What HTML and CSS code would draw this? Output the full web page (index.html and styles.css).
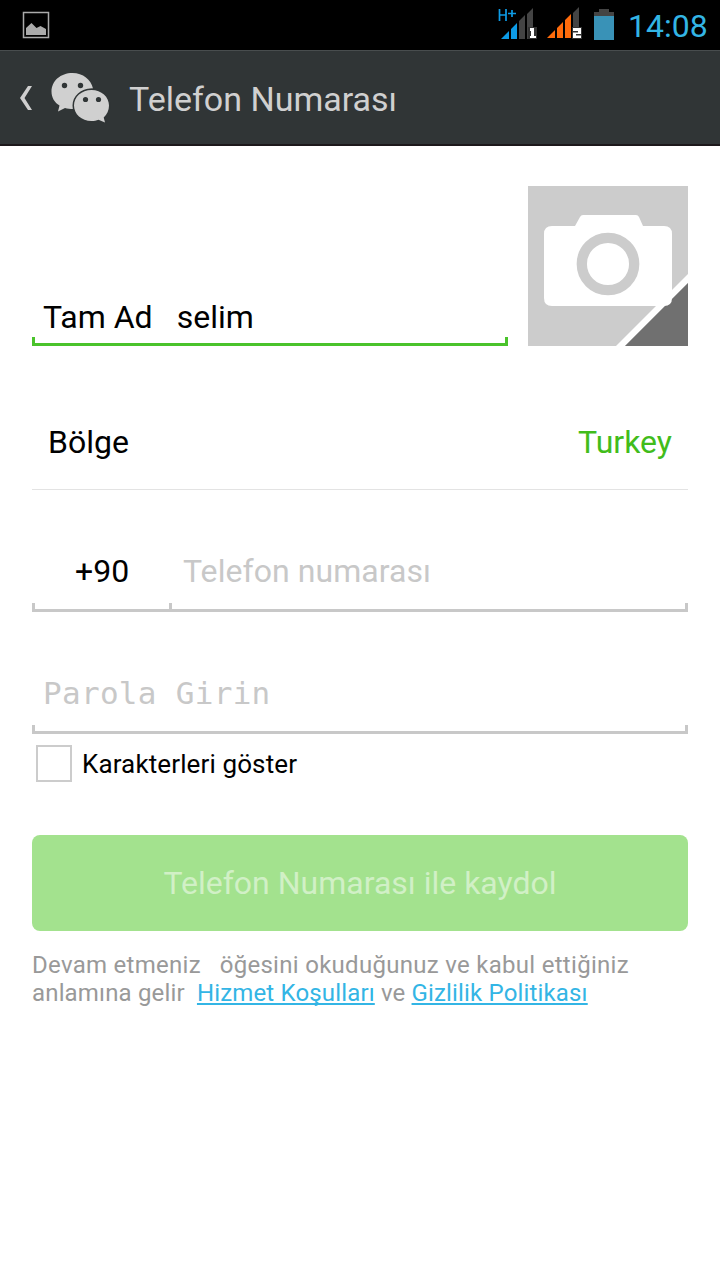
FILE: index.html
```html
<!DOCTYPE html>
<html lang="tr">
<head>
<meta charset="utf-8">
<title>Telefon Numarası</title>
<link rel="stylesheet" href="styles.css">
</head>
<body>
<div class="status">
  <svg class="status-picture" width="28" height="28" viewBox="0 0 28 28">
    <rect x="1.500" y="1.500" width="25" height="25" fill="none" stroke="#aaa" stroke-width="1.500"/>
    <path d="M4 24v-7l5.500-5 5 5 4-2 5.500 3v6z" fill="#aaa"/>
  </svg>
  <svg class="status-signals" width="124" height="42" viewBox="0 0 124 42">
    <g fill="none" stroke="#0d9be6" stroke-width="1.700"><path d="M3.500 9v12M10 9v12M3.500 15H10M12 13.500h8M16 10v7"/></g>
    <path d="M5 39l8-8v8zM15 29l6-6v16h-6z" fill="#0d9be6"/>
    <path d="M23 21l6-6v24h-6zM31 14l6-6v31h-6z" fill="#444"/>
    <rect x="32" y="27" width="9" height="12" fill="#333"/>
    <path d="M34 28h4v8h2v2h-6v-2h1v-5h-1z" fill="#fff"/>
    <path d="M51 38l8-8v8zM61 28l6-6v16h-6zM69 20l6-6v24h-6z" fill="#ff6b0b"/>
    <path d="M77 13l6-6v31h-6z" fill="#444"/>
    <rect x="76" y="27" width="10" height="12" fill="#333"/>
    <path d="M77 28h8v6h-5v1.500h5V38h-8v-5.500h5V31h-5z" fill="#fff"/>
    <path d="M98 16v-4h5v-3h10v3h5v4z" fill="#444"/>
    <rect x="98" y="16" width="20" height="24" fill="#3992b7"/>
  </svg>
  <span class="clock">14:08</span>
</div>
<header class="bar">
  <svg class="back" width="12" height="24" viewBox="0 0 12 24"><path d="M12 0H8L0 12l8 12h4L4.500 12z" fill="#cfcfcf"/></svg>
  <svg class="logo" width="60" height="52" viewBox="0 0 60 52">
    <path d="M21.500 1C9.500 1 .5 9 .5 19.500c0 6 3 11 8 14L7 39.500l7-3.500c2.500.8 5 1 8.500 1C21 26 29 17 42 16.500 40 7.500 32 1 21.500 1z" fill="#d0d0d0"/>
    <path class="bubble-front" d="M40.500 18c-10 0-17.500 7-17.500 15.500S30.500 49 40.500 49c2.500 0 5-.4 7-1.200l6.500 2.700-1.300-5C56 42.500 58 38.500 58 33.500 58 25 50.500 18 40.500 18z" fill="#d0d0d0"/>
    <g fill="#303536"><circle cx="13.500" cy="13.500" r="2.700"/><circle cx="29.500" cy="13.500" r="2.700"/><circle cx="34.500" cy="27.500" r="2.600"/><circle cx="47.500" cy="27.500" r="2.600"/></g>
  </svg>
  <h1 class="title">Telefon Numarası</h1>
</header>
<main class="form">
  <div class="profile">
    <div class="field field-active name"><span>Tam Ad</span><span>selim</span></div>
    <svg class="photo" width="160" height="160" viewBox="0 0 160 160">
      <rect width="160" height="160" fill="#ccc"/>
      <path d="M160 88v9L97 160h-9z" fill="#fff"/>
      <path d="M160 97v63H97z" fill="#707070"/>
      <path d="M24 40h23l5-9q1-2 3-2h53q2 0 3 2l4 9h21q8 0 8 8v64q0 8-8 8H24q-8 0-8-8V48q0-8 8-8z" fill="#fff"/>
      <circle cx="80" cy="78" r="26.200" fill="none" stroke="#ccc" stroke-width="10.300"/>
    </svg>
  </div>
  <div class="region"><span>Bölge</span><span class="country">Turkey</span></div>
  <div class="phone">
    <div class="field code">+90</div>
    <div class="field number">Telefon numarası</div>
  </div>
  <div class="field password">Parola Girin</div>
  <div class="show"><span class="box"></span><span class="show-label">Karakterleri göster</span></div>
  <div class="submit"><span class="submit-label">Telefon Numarası ile kaydol</span></div>
  <p class="terms"><span class="line1">Devam etmeniz &nbsp; öğesini okuduğunuz ve kabul ettiğiniz</span><br><span class="line2">anlamına gelir&nbsp; <a class="link">Hizmet Koşulları</a> ve <a class="link">Gizlilik Politikası</a></span></p>
</main>
</body>
</html>
```
FILE: styles.css
```css
* { box-sizing: border-box; }
body { margin: 0; width: 720px; height: 1280px; overflow: hidden; background: #fff; color: #000; font-family: Roboto, sans-serif; font-size: 32px; line-height: 38px; }
svg { display: block; flex: none; }
.status { height: 50px; background: #000; display: flex; align-items: flex-start; padding-left: 22px; }
.status-picture { margin-top: 11px; }
.status-signals { margin-left: 446px; }
.clock { margin: 7px 0 0 8px; color: #33b5e5; font-size: 32px; white-space: nowrap; }
.bar { height: 96px; background: #303536; border-top: 1px solid #484d4e; border-bottom: 2px solid #1c181b; display: flex; align-items: center; padding-left: 20px; }
.logo { margin-left: 19px; }
.bubble-front { stroke: #303536; stroke-width: 3px; paint-order: stroke; }
.title { margin: 2px 0 0 18px; color: #d0d0d0; font-size: 34px; font-weight: 400; white-space: nowrap; }
.form { padding: 40px 32px 0; }
.profile { display: flex; align-items: flex-end; gap: 20px; }
.field {
  --c: #c8c8c8;
  height: 60px;
  padding: 0 11px;
  white-space: pre;
  background:
    linear-gradient(var(--c), var(--c)) 0 100% / 100% 3px no-repeat,
    linear-gradient(var(--c), var(--c)) 0 100% / 3px 9px no-repeat,
    linear-gradient(var(--c), var(--c)) 100% 100% / 3px 9px no-repeat;
}
.field-active { --c: #4ac32b; }
.name { width: 476px; padding-top: 12px; display: flex; gap: 24px; }
.region { margin-top: 48px; height: 96px; padding: 1px 16px 0; display: flex; align-items: center; justify-content: space-between; border-bottom: 1px solid #e3e3e3; }
.country { color: #41bc1b; }
.phone { margin-top: 62px; display: flex; }
.code { width: 140px; padding-left: 43px; }
.number { flex: 1; color: #c8c8c8; letter-spacing: 0.06px; background-position: 0 100%, -9px 100%, 100% 100%; }
.password { margin-top: 62px; color: #c8c8c8; font-family: "DejaVu Sans Mono", monospace; font-size: 31px; letter-spacing: 0.3px; }
.show { display: flex; align-items: center; gap: 10px; margin: 11px 0 0 4px; height: 37px; font-size: 26px; letter-spacing: 0.12px; }
.box { width: 36px; height: 37px; border: 2px solid #ccc; }
.submit { margin-top: 53px; height: 96px; border-radius: 8px; background: #a3e28e; color: #d1f0c6; display: flex; align-items: center; justify-content: center; }
.terms { margin: 20px 0 0; color: #999; font-size: 24px; line-height: 28px; white-space: nowrap; }
.line1 { letter-spacing: 0.29px; }
.line2 { letter-spacing: 0.16px; }
.link { color: #33b5e5; text-decoration: underline; text-decoration-thickness: 2px; text-underline-offset: 2px; text-decoration-skip-ink: none; }
```
